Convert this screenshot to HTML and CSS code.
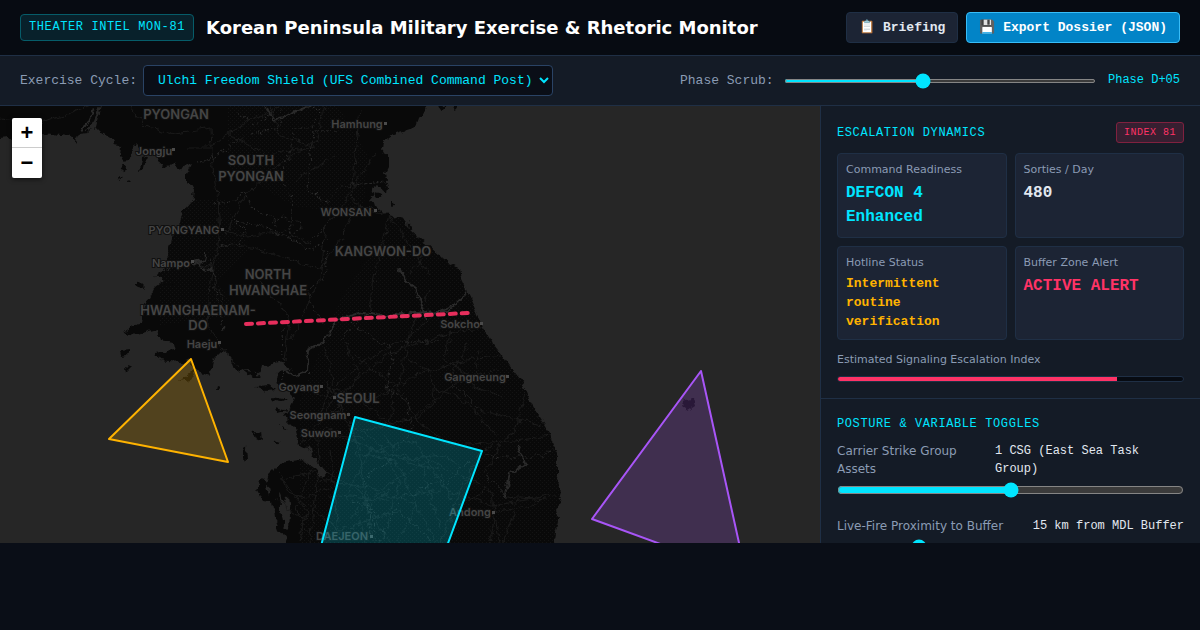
FILE: index.html
```html
<!DOCTYPE html>
<html lang="en">
<head>
<meta charset="utf-8">
<meta name="viewport" content="width=device-width, initial-scale=1">
<title>Korean Peninsula Military Exercise &amp; Rhetoric Monitor</title>
<link rel="stylesheet" href="styles.css">
</head>
<body>
<div class="app">
  <header class="topbar">
    <div class="brand">
      <span class="tag">THEATER INTEL MON-81</span>
      <h1 class="title">Korean Peninsula Military Exercise &amp; Rhetoric Monitor</h1>
    </div>
    <div class="actions">
      <button class="btn" type="button">📋 Briefing</button>
      <button class="btn btn-primary" type="button">💾 Export Dossier (JSON)</button>
    </div>
  </header>

  <div class="controls">
    <div class="control">
      <label for="cycle">Exercise Cycle:</label>
      <select id="cycle" class="select">
        <option>Ulchi Freedom Shield (UFS Combined Command Post)</option>
      </select>
    </div>
    <div class="control scrub">
      <label for="phase">Phase Scrub:</label>
      <input id="phase" class="range range-thin" type="range" min="1" max="10" value="5">
      <output class="phase" for="phase">Phase D+05</output>
    </div>
  </div>

  <main class="workspace">
    <section class="map" aria-label="Theater map">
      <svg class="map-canvas" viewBox="0 106 820 437" preserveAspectRatio="xMidYMin slice">
        <defs>
          <filter id="rough" x="-5%" y="-5%" width="110%" height="110%" color-interpolation-filters="sRGB">
            <feTurbulence type="fractalNoise" baseFrequency="0.12" numOctaves="3" seed="4"/>
            <feDisplacementMap in="SourceGraphic" scale="9" xChannelSelector="R" yChannelSelector="G"/>
          </filter>
          <pattern id="stipple" width="4" height="4" patternUnits="userSpaceOnUse">
            <rect class="dot" width="1" height="1"/><rect class="dot" x="2" y="2" width="1" height="1"/>
          </pattern>
          <path id="mainland" d="M-10 90V141L20 138 43 133 60 135 73 137 76 142 79 134 88 133 95 126 101 132 113 139 115 146 121 147 120 157 125 162 133 153 131 144 138 147 144 153 157 154 160 164 167 167 173 161 178 169 192 164 187 174 187 184 194 189 192 201 183 211 180 224 173 231 171 244 167 256 170 267 163 271 155 276 163 281 155 287 150 297 143 311 141 322 123 333 137 335 157 330 160 340 173 342 175 350 155 353 160 360 180 362 192 359 192 370 179 382 190 380 196 370 210 375 212 360 222 350 228 353 235 372 247 369 260 375 262 367 282 362 292 370 277 372 276 382 284 388 294 398 288 410 283 417 293 427 297 443 310 450 318 462 328 474 323 478 313 467 300 460 287 462 280 463 270 473 267 483 262 476 257 490 263 501 273 502 275 517 280 530 293 550H553L558 520 557 507 562 490 557 477 557 455 552 445 550 433 540 417 530 400 523 383 500 353 482 327 473 304 462 281 460 269 443 259 427 244 413 232 403 219 385 214 380 209 370 202 375 196 372 190 378 186 387 194 388 186 384 174 388 166 388 156 382 152 383 142 393 134 415 127 418 119 427 106V90Z"/>
          <clipPath id="land-clip"><use href="#mainland"/></clipPath>
        </defs>

        <rect class="sea" x="-400" y="100" width="1800" height="1000"/>
        <g filter="url(#rough)">
          <use class="land" href="#mainland"/>
          <path class="land" d="M120 351l10-1-3 6-6 1zM126 366l5 2-4 4zM134 285l6-2 6 6-8-1zM120 164l7 2-1 7-5-2zM118 176l5 1-4 3zM128 180l3 3-4 0zM142 158l6-2-3 13-6 2 2-6zM436 104l12 2-4 6-7-3zM450 104l8 0-2 4zM683 401l9-2 2 7-6 4-6-4zM217 384l3 1-1 4-3-1zM243 370l10 2 8 6-7 0zM256 386l14-1 6 5-9 1zM271 396l18 3-8 4-9-2zM277 408l10 3-7 2zM252 430l10 5 1 6-7-3zM243 449l3-3 1 13-4 2zM272 440l9 3-5 3zM280 425l6 3-4 1zM390 201l5 3-3 2zM374 192l7 2-3 4z"/>
          <path class="inlet" d="M279 492l4 12 5-10 2 20-1 16-5-5-4-15zM100 106l-6 14-8 12 10-6 5-20zM265 485l6 5-3 4z"/>
        </g>

        <g clip-path="url(#land-clip)">
          <path class="stipple" d="M228 106h110l30 50-5 60-70-10-65-40zM170 200h55l25 50-40 40-50-8zM400 200l60 70 30 60 70 110v110H300V400l40-100 40-60zM250 106h50v60h-40zM160 285h60l20 30-80 10z"/>
          <g filter="url(#rough)">
            <path class="road" d="M130 106l15 20 30 8 35-6 2 40 6 30 2 40-10 40-2 50 30 40M0 118l40 6 50-18M187 148h23l30-22 40-20M215 228l30 8 40-5 25 12 20-20 20-30 25-40M225 235l20-40 40-35 35-20M219 244l40 5 60 20 20-25 15-35 35 6 40 60M196 262l15 5 15 45M260 280l30 40-5 40M325 225l-5 55-30 60M390 215l-15 55-5 40-30 30M410 275l20-30M440 310l-35 30-40 20-30 25M295 180l40-25M360 110l-5 45-3 50 28 5M228 134l38 20 40-5M270 106l10 30 35 10 10-40"/>
            <path class="road" d="M335 398l40 2 40-25 50-15 35-5M335 398l25 50 5 50 10 50M335 398l-20 30 5 30-10 85M290 385l45 13-10-50M335 398l55-45 60-20 32-6M418 420l-20-30 12-60 20-40M418 420l30 25 60-3 42-6M360 430l50-10 50-40 48-4M325 430l50 20 40-10 30 50 50 15 60-10M320 480l60 10 50-30 60 30 10 53M300 500l40 30 60-20 30 30M280 480l40-10 40 20 30 53M275 500l30 20-5 20M440 543l20-50 20-40 35-20 10-40M380 543l20-60-20-40-30-20M345 500l25-50 50 10 20 70M490 543l5-30 45-10M470 340l-20 40 30 30 60 15M470 460l-30 30-60 10-50-5M325 382l20 30-25 5 10-30 20 8-20 20M360 400l30 25 5-40-40-30M300 445l25-15 40 10M330 450l10 90M350 520l40-30M400 460l40 10 10 30"/>
            <path class="road" d="M278 470l10 22 17 6 25-12M284 482l25 30-10 22M310 470l-14 36 14 30M352 420l5 34 38 6 21 44-19 39M365 543l-8-35 23-16 35 12 22 39M385 436l15 24 40-5 22 10M450 332l-5 28 26 16 28-7M405 355l25 18 5 30-19 17M432 388l36 14 28 35M480 350l-8 36 30 10M345 340l14 35-19 23M500 445l-15 30 22 22 40 3M515 512l-12 31M460 505l25-15"/>
            <path class="river" d="M206 252l-2 8-11 3M193 263l18 7M265 106l10 15 45-20M95 106l-6 14-8 12M337 320l25-8 30 4 45-5 12 0 15-14 6-25M337 320l-14 22-15 8-1 22-12 4-13-9M400 268l8 15 8 6 10 30M505 495l5-22 15-8-8-20M455 304l-15 7-40 3"/>
            <path class="border" d="M313 106l10 10-15 12-15 0-1 20-13 30 15 25-5 35 22 12 15-10M337 130h-24l-5 60 20 12 12-16 45-4M236 114l20 10 20-15M250 134l30-6 2-20M195 163l20-5 30-24M213 205l25-5 5-10 10 20 20 8 3 14 22 12M218 245l20 0 7-14-10-10 20 3 35 15 12-15-20-8-10 5M210 260l8 40 5 30M328 250l-5 30-15 10 5 20 12 15M282 330l2 55M352 322l12 10 25 15 3 10-5 32 20 10 5 30-25 35-22 12 5 60M440 342l-40 0M486 454l15 3 40 0 15-10M440 480l-40 20-20 40M352 500l20 10 5 30"/>
          </g>
        </g>

        <g class="labels region">
          <text x="176" y="119">PYONGAN</text>
          <text x="251" y="165">SOUTH</text><text x="251" y="181">PYONGAN</text>
          <text x="383" y="256">KANGWON-DO</text>
          <text x="268" y="279">NORTH</text><text x="268" y="295">HWANGHAE</text>
          <text x="198" y="315">HWANGHAENAM-</text><text x="198" y="330">DO</text>
          <text x="358" y="403">SEOUL</text>
        </g>
        <g class="labels city">
          <text x="184" y="234">PYONGYANG</text><text x="346" y="216">WONSAN</text><text x="342" y="540">DAEJEON</text>
        </g>
        <g class="labels town">
          <text x="357" y="128">Hamhung</text><text x="154" y="155">Jongju</text><text x="171" y="267">Nampo</text>
          <text x="460" y="328">Sokcho</text><text x="202" y="348">Haeju</text><text x="299" y="391">Goyang</text>
          <text x="475" y="381">Gangneung</text><text x="318" y="419">Seongnam</text><text x="319" y="437">Suwon</text><text x="470" y="516">Andong</text>
        </g>
        <path class="marker" d="M384 122h3v3h-3zM172 148h3v3h-3zM374 209h3v3h-3zM221 228h3v3h-3zM191 260h3v3h-3zM480 322h3v3h-3zM218 341h3v3h-3zM320 385h3v3h-3zM333 396h3v3h-3zM506 375h3v3h-3zM347 413h3v3h-3zM338 431h3v3h-3zM492 511h3v3h-3zM370 535h3v3h-3z"/>

        <path class="zone zone-amber" d="M191 359L109 439 228 462Z"/>
        <path class="zone zone-cyan" d="M355 417L482 451 440 565 316 565Z"/>
        <path class="zone zone-violet" d="M701 371L592 519 748 576 745 570Z"/>
        <path class="mdl" d="M246 324L468 313"/>
      </svg>
      <div class="zoom">
        <button class="zoom-btn" type="button" aria-label="Zoom in">+</button>
        <button class="zoom-btn" type="button" aria-label="Zoom out">−</button>
      </div>
    </section>

    <aside class="sidebar">
      <section class="panel">
        <div class="panel-head">
          <h2 class="panel-title">ESCALATION DYNAMICS</h2>
          <span class="index">INDEX 81</span>
        </div>
        <div class="stats">
          <div class="stat"><div class="caption">Command Readiness</div><div class="value cyan">DEFCON 4 Enhanced</div></div>
          <div class="stat"><div class="caption">Sorties / Day</div><div class="value">480</div></div>
          <div class="stat"><div class="caption">Hotline Status</div><div class="value value-small amber">Intermittent routine verification</div></div>
          <div class="stat"><div class="caption">Buffer Zone Alert</div><div class="value red">ACTIVE ALERT</div></div>
        </div>
        <div class="caption" id="index-label">Estimated Signaling Escalation Index</div>
        <div class="meter" role="meter" aria-labelledby="index-label" aria-valuenow="81" aria-valuemin="0" aria-valuemax="100"><div class="meter-fill" style="width:81%"></div></div>
      </section>
      <section class="panel">
        <h2 class="panel-title">POSTURE &amp; VARIABLE TOGGLES</h2>
        <div class="field">
          <div class="field-row"><label for="carrier">Carrier Strike Group Assets</label><output for="carrier">1 CSG (East Sea Task Group)</output></div>
          <input id="carrier" class="range" type="range" min="0" max="2" value="1">
        </div>
        <div class="field">
          <div class="field-row"><label for="fire">Live-Fire Proximity to Buffer</label><output for="fire">15 km from MDL Buffer</output></div>
          <input id="fire" class="range" type="range" min="5" max="50" value="15">
        </div>
      </section>
    </aside>
  </main>
</div>
</body>
</html>
```
FILE: styles.css
```css
:root {
  --bg: #0a0e17;
  --panel: #141b26;
  --card: #1c2434;
  --line: #1f2f45;
  --cyan: #00e5ff;
  --amber: #ffb300;
  --red: #ff3366;
  --text: #e2e8f0;
  --muted: #8b9bb4;
  --mono: "Liberation Mono", monospace;
  --sans: "DejaVu Sans", sans-serif;
}

* { box-sizing: border-box; }

body {
  margin: 0;
  background: var(--bg);
  color: var(--text);
  font-family: var(--sans);
  color-scheme: dark;
}

h1, h2 { margin: 0; }

.app {
  display: flex;
  flex-direction: column;
  height: calc(100vh - 87px);
  overflow: hidden;
}

.topbar, .controls {
  display: flex;
  align-items: center;
  justify-content: space-between;
  gap: 12px;
  border-bottom: 1px solid var(--line);
}

.topbar { padding: 12px 20px; background: #070b12; }
.brand { display: flex; align-items: center; gap: 12px; }

.tag {
  padding: 4px 8px;
  border: 1px solid #065c69;
  border-radius: 4px;
  background: #08212b;
  color: var(--cyan);
  font: 12px/17px var(--mono);
  letter-spacing: 0.05em;
}

.title { color: #fff; font-size: 18px; line-height: 27px; }
.actions { display: flex; gap: 8px; }

.btn {
  padding: 5px 12px;
  border: 1px solid var(--line);
  border-radius: 4px;
  background: var(--card);
  color: var(--text);
  font: bold 13px/19px var(--mono);
}

.btn-primary { border-color: #38bdf8; background: #0284c7; color: #fff; }

.controls { padding: 9px 20px; background: var(--panel); }

.control {
  display: flex;
  align-items: center;
  gap: 6px;
  color: var(--muted);
  font: 13px/19px var(--mono);
}

.scrub { flex: 0 0 500px; gap: 10px; white-space: nowrap; }

.select {
  width: 410px;
  padding: 6px 4px 6px 10px;
  border: 1px solid #2a4365;
  border-radius: 4px;
  background: var(--bg);
  color: var(--cyan);
  font: 13px/19px var(--mono);
}

.range {
  display: block;
  width: 100%;
  height: 16px;
  margin: 0;
  accent-color: var(--cyan);
}

.range-thin { flex: 1; min-width: 0; height: 4px; }
.phase { margin-left: 2px; color: var(--cyan); font-size: 12px; }

.workspace { display: flex; flex: 1; min-height: 0; }

.map { position: relative; flex: 1; min-width: 0; background: #262626; overflow: hidden; }
.map-canvas { display: block; width: 100%; height: 100%; }
.sea, .inlet { fill: #262626; }
.land { fill: #090909; }
.dot { fill: #131313; }
.stipple { fill: url(#stipple); }
.road { fill: none; stroke: #1b1b1b; }
.river { fill: none; stroke: #2a2a2a; stroke-width: 2; }
.border { fill: none; stroke: #2c2c2c; stroke-dasharray: 2 2; }

.labels {
  fill: #454545;
  stroke: #101010;
  stroke-width: 2px;
  paint-order: stroke;
  text-anchor: middle;
  font-family: Inter, sans-serif;
  font-weight: 600;
}

.region { font-size: 13px; }
.city, .town { font-size: 11px; }
.marker { fill: #4a4a4a; }

.zone { stroke-width: 2; fill-opacity: 0.2; stroke-linejoin: round; }
.zone-amber { stroke: var(--amber); fill: var(--amber); }
.zone-cyan { stroke: var(--cyan); fill: var(--cyan); }
.zone-violet { stroke: #a855f7; fill: #a855f7; }
.mdl { fill: none; stroke: var(--red); stroke-width: 4; stroke-linecap: round; stroke-dasharray: 6 6; opacity: 0.9; }

.zoom {
  position: absolute;
  top: 12px;
  left: 12px;
  display: flex;
  flex-direction: column;
  border-radius: 2px;
  box-shadow: 0 1px 5px rgba(0, 0, 0, 0.65);
  overflow: hidden;
}

.zoom-btn {
  width: 30px;
  height: 30px;
  padding: 0;
  border: 0;
  background: #fff;
  color: #000;
  font: bold 22px/30px "Liberation Sans", sans-serif;
}

.zoom-btn:first-child { border-bottom: 1px solid #ccc; }

.sidebar {
  flex: 0 0 380px;
  border-left: 1px solid var(--line);
  background: var(--panel);
  overflow: hidden;
}

.panel { padding: 16px; border-bottom: 1px solid var(--line); }

.panel-head {
  display: flex;
  align-items: center;
  justify-content: space-between;
  margin-bottom: 10px;
}

.panel-title {
  color: var(--cyan);
  font: 12px/18px var(--mono);
  letter-spacing: 0.05em;
}

.index {
  padding: 3px 7px 2px;
  border: 1px solid #80213f;
  border-radius: 3px;
  background: #371f31;
  color: var(--red);
  font: 10px/14px var(--mono);
  letter-spacing: 0.05em;
}

.stats {
  display: grid;
  grid-template-columns: 1fr 1fr;
  gap: 8px;
  margin-bottom: 12px;
}

.stat {
  padding: 8px;
  border: 1px solid var(--line);
  border-radius: 4px;
  background: var(--card);
}

.caption { color: var(--muted); font-size: 11px; line-height: 16px; }

.value {
  margin-top: 3px;
  font: bold 16px/24px var(--mono);
}

.value-small { font-size: 13px; line-height: 19px; }
.cyan { color: var(--cyan); }
.amber { color: var(--amber); }
.red { color: var(--red); }

.meter {
  height: 6px;
  margin-top: 8px;
  border: 1px solid var(--line);
  border-radius: 3px;
  background: #070b12;
  overflow: hidden;
}

.meter-fill { height: 100%; background: var(--red); }

.field { margin: 9px 0 19px; }

.field-row {
  display: flex;
  justify-content: space-between;
  margin-bottom: 4px;
  color: var(--muted);
  font-size: 12px;
  line-height: 18px;
}

.field-row output { color: var(--text); font-family: var(--mono); }
```
